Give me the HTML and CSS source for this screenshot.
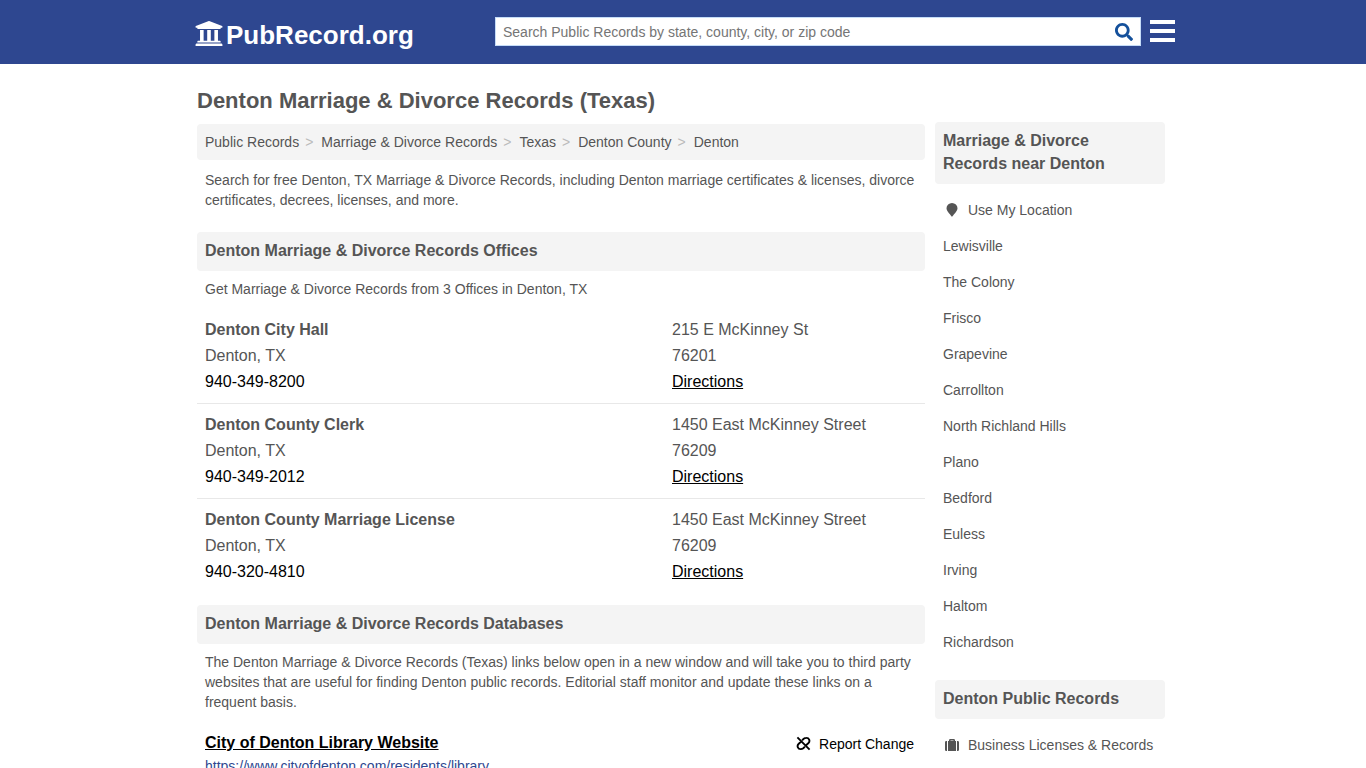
FILE: index.html
```html
<!DOCTYPE html>
<html lang="en">
<head>
<meta charset="utf-8">
<meta name="viewport" content="width=device-width, initial-scale=1">
<title>Denton Marriage &amp; Divorce Records (Texas)</title>
<link rel="stylesheet" href="styles.css">
</head>
<body>
<header class="site-header">
  <div class="container header-row">
    <a class="logo" href="#">
      <svg class="logo-icon" viewBox="10 32 492 464" aria-hidden="true"><path d="M496 128v16a8 8 0 0 1-8 8h-24v12c0 6.627-5.373 12-12 12H60c-6.627 0-12-5.373-12-12v-12H24a8 8 0 0 1-8-8v-16a8 8 0 0 1 4.941-7.392l232-88a7.996 7.996 0 0 1 6.118 0l232 88A8 8 0 0 1 496 128zm-24 304H40c-13.255 0-24 10.745-24 24v16a8 8 0 0 0 8 8h464a8 8 0 0 0 8-8v-16c0-13.255-10.745-24-24-24zM96 192v192H60c-6.627 0-12 5.373-12 12v20h416v-20c0-6.627-5.373-12-12-12h-36V192h-64v192h-64V192h-64v192h-64V192H96z"/></svg>
      <span>PubRecord.org</span>
    </a>
    <form class="search">
      <input class="search-input" type="text" aria-label="Search Public Records" placeholder="Search Public Records by state, county, city, or zip code">
      <button class="search-button" type="button" aria-label="Search">
        <svg class="search-icon" viewBox="0 0 512 512" aria-hidden="true"><path d="M505 442.7L405.3 343c-4.5-4.5-10.6-7-17-7H372c27.6-35.3 44-79.7 44-128C416 93.1 322.9 0 208 0S0 93.1 0 208s93.1 208 208 208c48.3 0 92.7-16.4 128-44v16.3c0 6.4 2.5 12.5 7 17l99.7 99.7c9.4 9.4 24.6 9.4 33.9 0l28.3-28.3c9.4-9.4 9.4-24.6.1-34zM208 336c-70.7 0-128-57.2-128-128 0-70.7 57.2-128 128-128 70.7 0 128 57.2 128 128 0 70.7-57.2 128-128 128z"/></svg>
      </button>
    </form>
    <button class="menu-button" type="button" aria-label="Menu">
      <svg class="menu-icon" viewBox="0 0 25 22" aria-hidden="true"><path d="M0 0h25v4H0zM0 9h25v4H0zM0 18h25v4H0z"/></svg>
    </button>
  </div>
</header>

<div class="container page">
  <main class="main">
    <h1 class="page-title">Denton Marriage &amp; Divorce Records (Texas)</h1>
    <nav aria-label="Breadcrumb">
      <ol class="breadcrumb">
        <li><a href="#">Public Records</a></li>
        <li><a href="#">Marriage &amp; Divorce Records</a></li>
        <li><a href="#">Texas</a></li>
        <li><a href="#">Denton County</a></li>
        <li>Denton</li>
      </ol>
    </nav>
    <p class="text">Search for free Denton, TX Marriage &amp; Divorce Records, including Denton marriage certificates &amp; licenses, divorce certificates, decrees, licenses, and more.</p>

    <section class="section section-offices">
      <h2 class="heading">Denton Marriage &amp; Divorce Records Offices</h2>
      <p class="text">Get Marriage &amp; Divorce Records from 3 Offices in Denton, TX</p>
      <ul class="offices">
        <li class="office">
          <div><h3 class="office-name">Denton City Hall</h3><p>Denton, TX</p><a class="phone" href="#">940-349-8200</a></div>
          <div><p>215 E McKinney St</p><p>76201</p><a class="directions" href="#">Directions</a></div>
        </li>
        <li class="office">
          <div><h3 class="office-name">Denton County Clerk</h3><p>Denton, TX</p><a class="phone" href="#">940-349-2012</a></div>
          <div><p>1450 East McKinney Street</p><p>76209</p><a class="directions" href="#">Directions</a></div>
        </li>
        <li class="office">
          <div><h3 class="office-name">Denton County Marriage License</h3><p>Denton, TX</p><a class="phone" href="#">940-320-4810</a></div>
          <div><p>1450 East McKinney Street</p><p>76209</p><a class="directions" href="#">Directions</a></div>
        </li>
      </ul>
    </section>

    <section class="section section-databases">
      <h2 class="heading">Denton Marriage &amp; Divorce Records Databases</h2>
      <p class="text">The Denton Marriage &amp; Divorce Records (Texas) links below open in a new window and will take you to third party websites that are useful for finding Denton public records. Editorial staff monitor and update these links on a frequent basis.</p>
      <article class="database">
        <div class="database-row">
          <a class="database-name" href="#">City of Denton Library Website</a>
          <button class="report" type="button">
            <svg class="report-icon" viewBox="0 0 16 16" aria-hidden="true"><path d="M1.500 1.500l13 13M6.500 4.700l1.700-1.700Q9.500 2 11 2a3.200 3.200 0 0 1 2.300 5.500L10.800 9.800M9.500 11.300l-1.700 1.700Q6.500 14 5 14a3.200 3.200 0 0 1-2.300-5.500L5.200 6.200"/></svg>
            <span>Report Change</span>
          </button>
        </div>
        <a class="database-url" href="#">https://www.cityofdenton.com/residents/library</a>
      </article>
    </section>
  </main>

  <aside class="sidebar">
    <section>
      <h2 class="heading">Marriage &amp; Divorce Records near Denton</h2>
      <ul class="side-list">
        <li><a href="#"><svg class="side-icon" viewBox="0 0 18 14" aria-hidden="true"><path d="M9 14C8.300 12.200 3.500 8.600 3.500 5.200a5.500 5.200 0 0 1 11 0C14.500 8.600 9.700 12.200 9 14z"/></svg>Use My Location</a></li>
        <li><a href="#">Lewisville</a></li>
        <li><a href="#">The Colony</a></li>
        <li><a href="#">Frisco</a></li>
        <li><a href="#">Grapevine</a></li>
        <li><a href="#">Carrollton</a></li>
        <li><a href="#">North Richland Hills</a></li>
        <li><a href="#">Plano</a></li>
        <li><a href="#">Bedford</a></li>
        <li><a href="#">Euless</a></li>
        <li><a href="#">Irving</a></li>
        <li><a href="#">Haltom</a></li>
        <li><a href="#">Richardson</a></li>
      </ul>
    </section>
    <section class="side-section">
      <h2 class="heading">Denton Public Records</h2>
      <ul class="side-list">
        <li><a href="#"><svg class="side-icon" viewBox="0 0 18 14" aria-hidden="true"><path d="M4 3v10H3.300A1.300 1.300 0 0 1 2 11.700V4.300A1.300 1.300 0 0 1 3.300 3zM14 3h.7A1.300 1.300 0 0 1 16 4.300v7.400a1.300 1.300 0 0 1-1.300 1.300H14zM13 3v10H5V3h1V2.300A1.300 1.300 0 0 1 7.300 1h3.400A1.300 1.300 0 0 1 12 2.300V3zM10.500 3v-.6h-3V3z"/></svg>Business Licenses &amp; Records</a></li>
      </ul>
    </section>
  </aside>
</div>
</body>
</html>
```

FILE: styles.css
```css
* {
  box-sizing: border-box;
}

body {
  margin: 0;
  background: #fff;
  color: #555;
  font-family: "Liberation Sans", Arial, sans-serif;
  font-size: 14px;
  line-height: 20px;
}

h1, h2, h3, p, ul, ol {
  margin: 0;
  padding: 0;
}

ul, ol {
  list-style: none;
}

a {
  color: inherit;
  text-decoration: none;
}

button {
  border: 0;
  padding: 0;
  background: none;
  color: inherit;
  font: inherit;
  cursor: pointer;
}

svg {
  display: block;
  flex: none;
  fill: currentColor;
}

.container {
  max-width: 984px;
  margin: 0 auto;
}

.site-header {
  background: #2e4790;
  color: #fff;
}

.header-row {
  display: flex;
  align-items: center;
  min-height: 64px;
  padding: 0 0 2px 4px;
}

.logo {
  display: flex;
  align-items: center;
  gap: 3px;
  padding-top: 7px;
  flex: 0 1 300px;
  font-size: 26px;
  font-weight: bold;
  line-height: 32px;
}

.logo-icon {
  width: 28px;
  height: 26px;
  margin-bottom: 2px;
}

.search {
  display: flex;
  flex: 1;
  border: 1px solid #c5dcf8;
  background: #fff;
}

.search-input {
  flex: 1;
  min-width: 0;
  height: 27px;
  border: 0;
  padding: 2px 8px 0 7px;
  outline: 0;
  background: transparent;
  color: #555;
  font: inherit;
}

.search-input::placeholder {
  color: #757575;
}

.search-button {
  padding: 2px 7px 0;
  color: #14509b;
}

.search-icon {
  width: 18px;
  height: 18px;
}

.menu-button {
  margin-left: 9px;
}

.menu-icon {
  width: 25px;
  height: 22px;
}

.page {
  display: flex;
  align-items: flex-start;
  gap: 10px;
  padding: 0 10px 24px 6px;
}

.main {
  flex: 1;
  min-width: 0;
}

.sidebar {
  flex: 0 0 230px;
  padding-top: 58px;
}

.page-title {
  padding: 21px 0 7px;
  font-size: 22px;
  line-height: 32px;
}

.breadcrumb {
  display: flex;
  flex-wrap: wrap;
  padding: 8px;
  border-radius: 4px;
  background: #f4f4f4;
}

.breadcrumb li + li::before {
  content: ">";
  padding: 0 8px 0 6px;
  color: #bbb;
}

.text {
  padding: 10px 8px 0;
}

.heading {
  padding: 7px 8px 9px;
  border-radius: 4px;
  background: #f4f4f4;
  font-size: 16px;
  line-height: 23px;
}

.section .text {
  padding-top: 8px;
}

.section-offices {
  margin-top: 22px;
}

.section-databases {
  margin-top: 12px;
}

.offices {
  padding-top: 10px;
}

.office {
  display: grid;
  grid-template-columns: 467px 1fr;
  padding: 8px;
  font-size: 16px;
  line-height: 26px;
}

.office + .office {
  border-top: 1px solid #e8e8e8;
}

.office-name {
  font-size: 16px;
}

.phone, .directions, .database-name, .report {
  color: #000;
}

.directions, .database-name {
  text-decoration: underline;
}

.database {
  padding: 17px 8px 0;
}

.database-row {
  display: flex;
  align-items: center;
  justify-content: space-between;
  padding-right: 3px;
  line-height: 27px;
}

.database-name {
  font-size: 16px;
  font-weight: bold;
}

.report {
  display: flex;
  align-items: center;
  gap: 8px;
  padding-top: 2px;
  line-height: 20px;
}

.report-icon {
  width: 15px;
  height: 15px;
  fill: none;
  stroke: currentColor;
  stroke-width: 2;
}

.database-url {
  color: #2e4790;
}

.side-list {
  padding-top: 8px;
}

.side-list a {
  display: flex;
  align-items: center;
  gap: 7px;
  padding: 8px;
}

.side-icon {
  width: 18px;
  height: 14px;
}

.side-section {
  margin-top: 20px;
}
```
